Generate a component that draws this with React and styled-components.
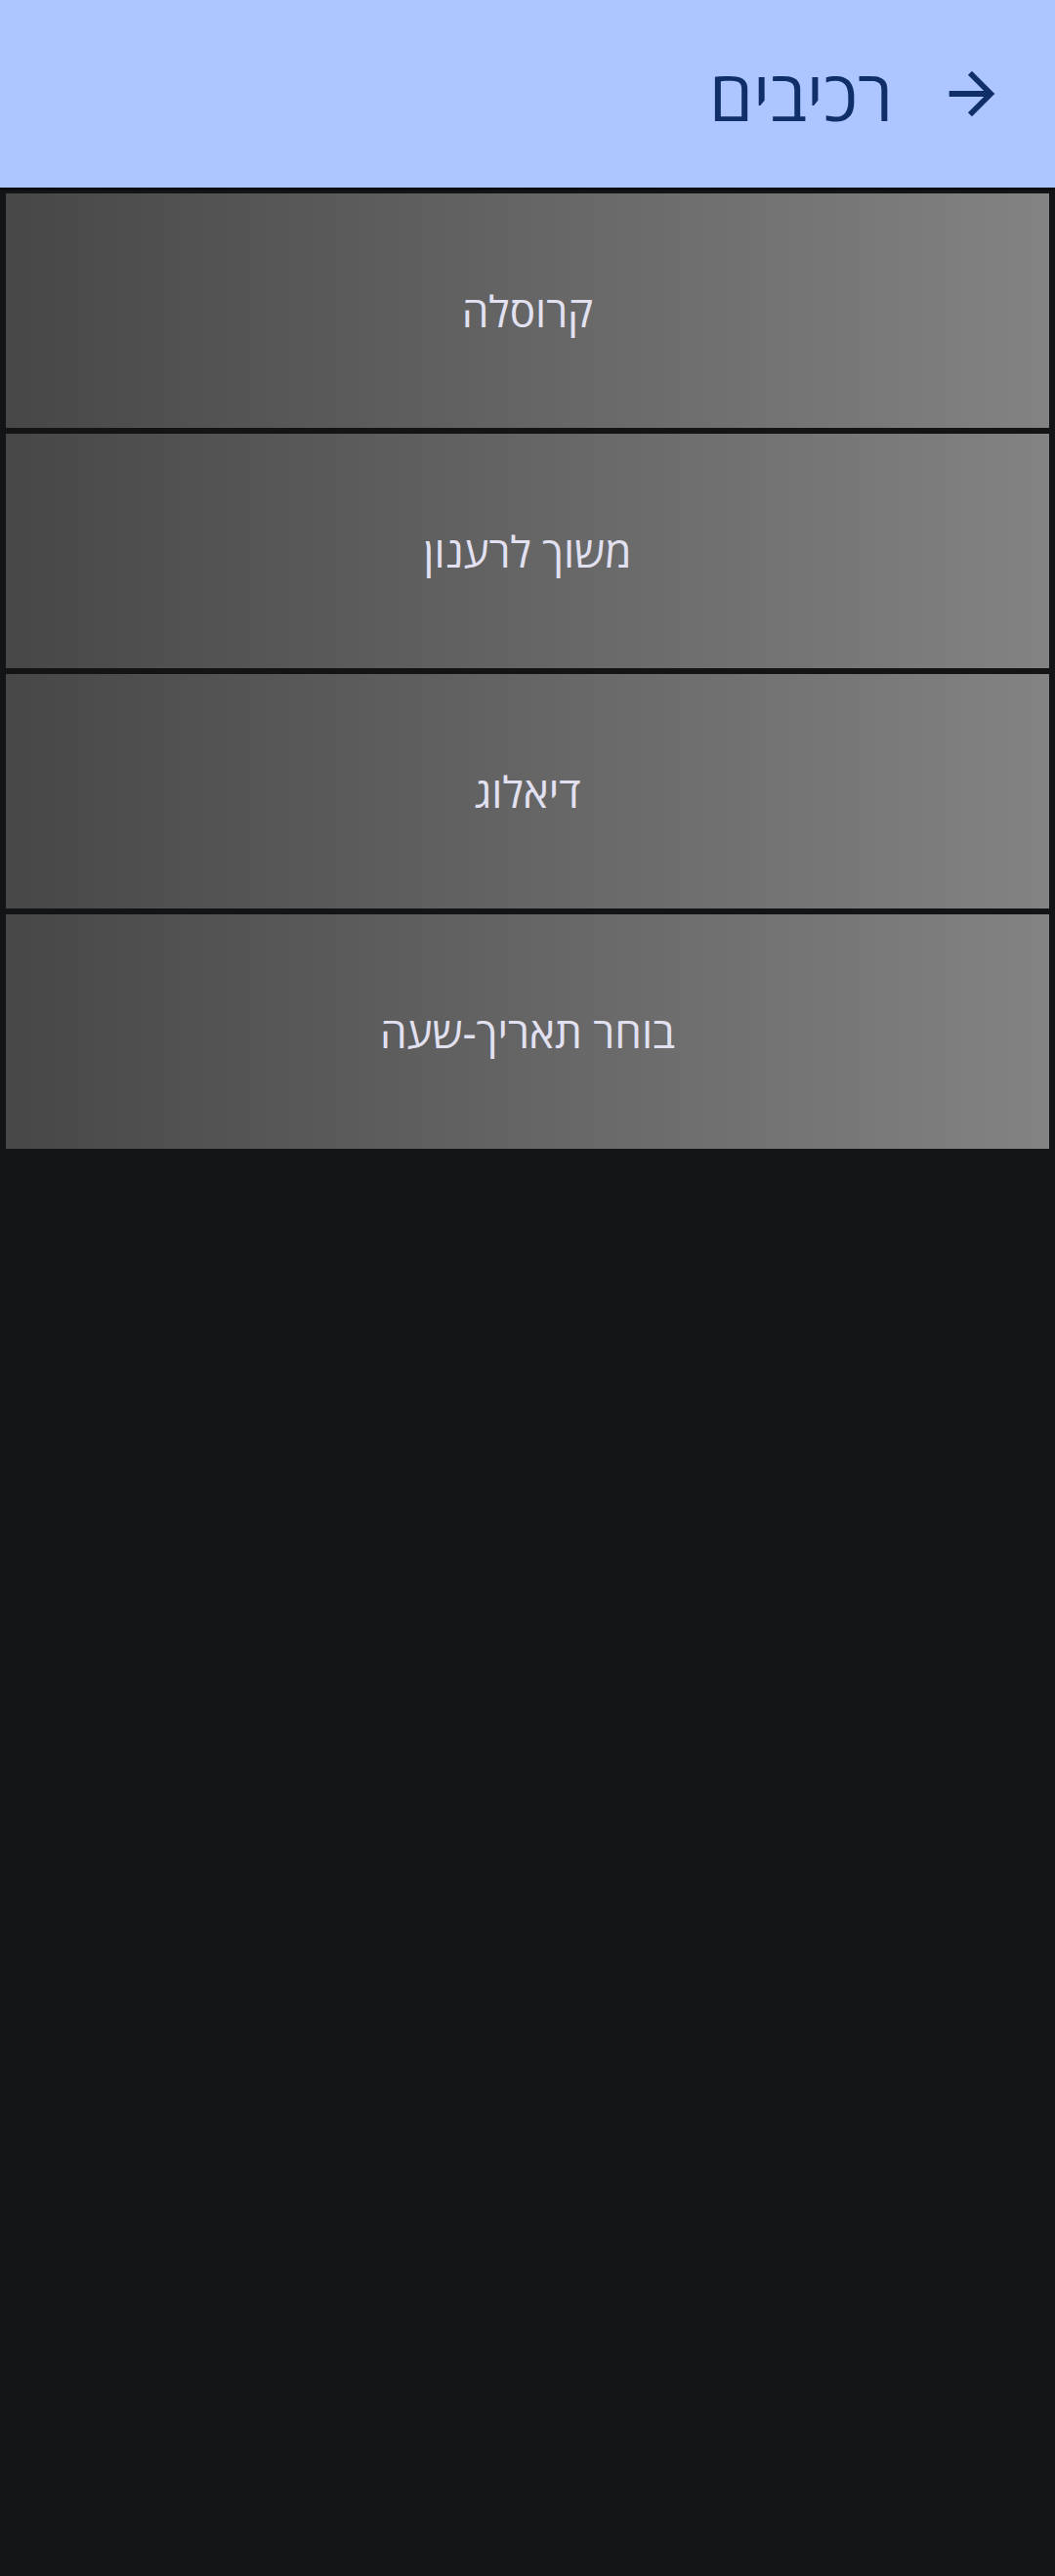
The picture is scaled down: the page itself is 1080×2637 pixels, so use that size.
import React from 'react';
import styled, { createGlobalStyle } from 'styled-components';

const GlobalStyle = createGlobalStyle`
  html, body {
    margin: 0;
    padding: 0;
    background: #121416;
  }
  body {
    font-family: 'Noto Sans', 'Open Sans', 'DejaVu Sans', sans-serif;
  }
`;

const Page = styled.div`
  min-height: 100vh;
  background: #121416;
  direction: rtl;
`;

const TopBar = styled.header`
  height: 195px;
  background: #adc6ff;
  display: flex;
  align-items: center;
  padding-right: 50px;
  gap: 46px;
  box-sizing: border-box;
  border-bottom: 3px solid #0c0e12;
`;

const BackButton = styled.button`
  width: 70px;
  height: 70px;
  padding: 0;
  border: none;
  background: transparent;
  color: #102f68;
  display: flex;
  align-items: center;
  justify-content: center;
  svg {
    display: block;
  }
`;

const Title = styled.h1`
  margin: 0;
  font-size: 72px;
  font-weight: 400;
  color: #102f68;
  line-height: 1;
`;

const List = styled.nav`
  display: flex;
  flex-direction: column;
  gap: 6px;
  padding: 3px 6px 0;
`;

const Item = styled.button`
  height: 240px;
  border: none;
  margin: 0;
  padding: 0;
  display: flex;
  align-items: center;
  justify-content: center;
  background: linear-gradient(to right, #474747, #838383);
  color: #e2e1f2;
  font-family: inherit;
  font-size: 44px;
  cursor: pointer;
`;

const items = ['קרוסלה', 'משוך לרענון', 'דיאלוג', 'בוחר תאריך-שעה'];

const ArrowForward = () => (
  <svg width="70" height="70" viewBox="0 0 24 24" fill="currentColor">
    <path d="M12 4l-1.41 1.41L16.17 11H4v2h12.17l-5.58 5.59L12 20l8-8z" />
  </svg>
);

export default function App() {
  return (
    <Page>
      <GlobalStyle />
      <TopBar>
        <BackButton aria-label="חזרה">
          <ArrowForward />
        </BackButton>
        <Title>רכיבים</Title>
      </TopBar>
      <List>
        {items.map((it) => (
          <Item key={it}>{it}</Item>
        ))}
      </List>
    </Page>
  );
}
